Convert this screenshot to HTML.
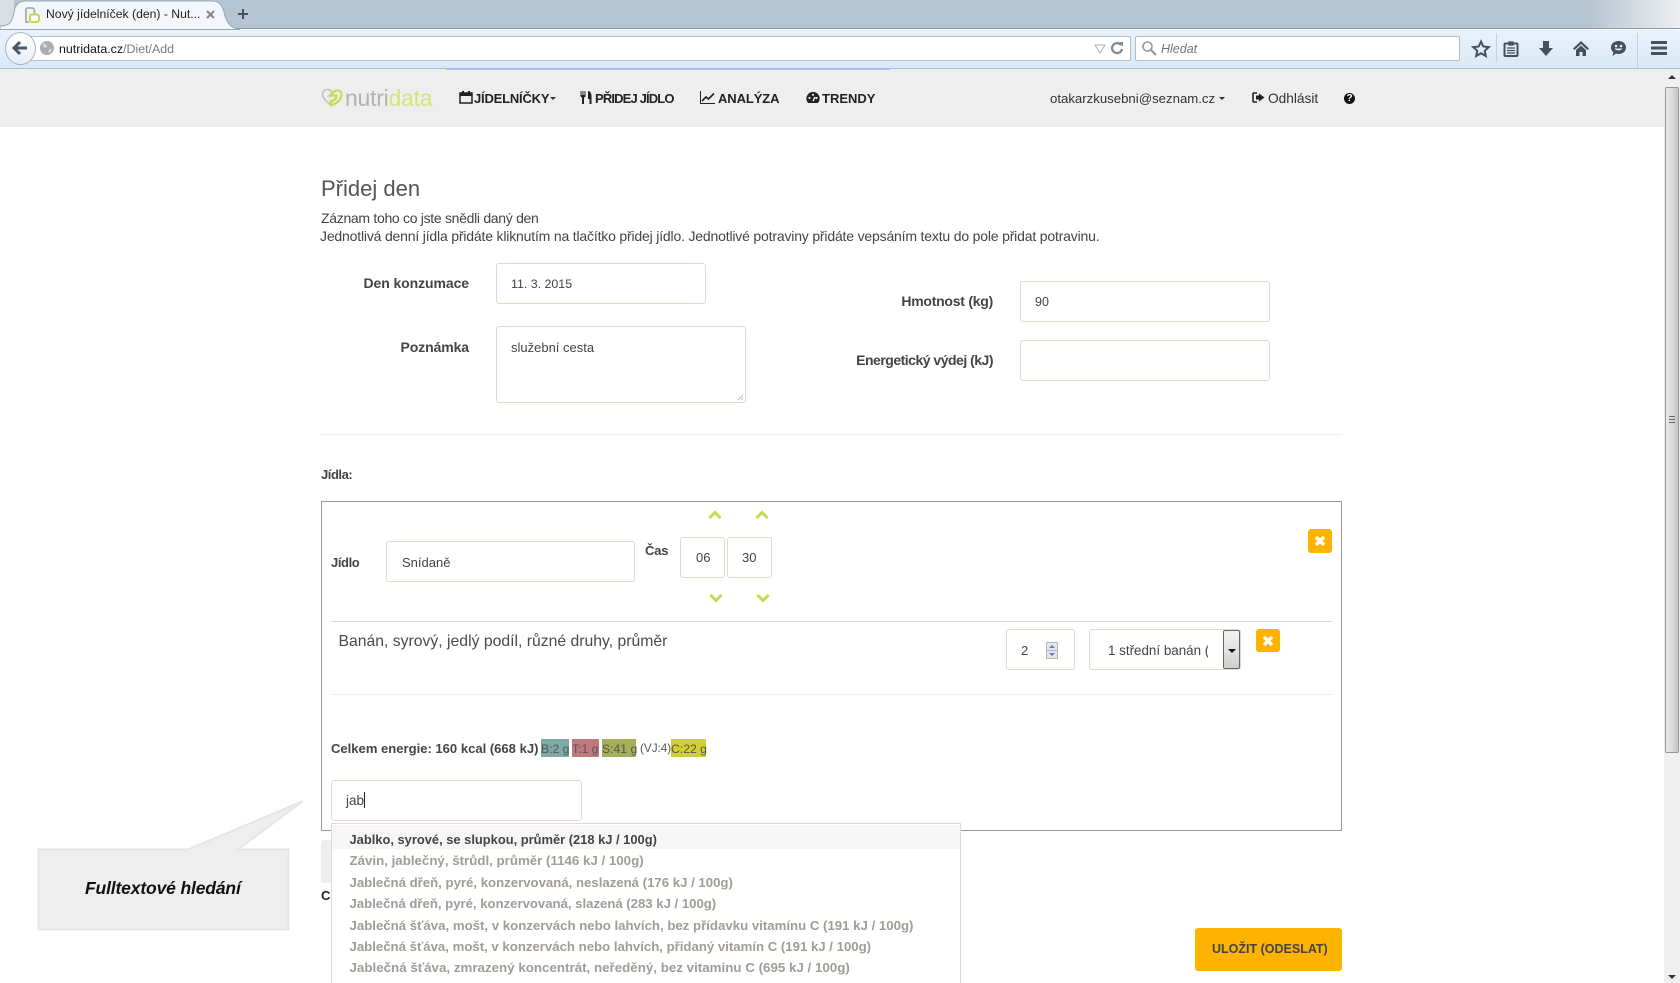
<!DOCTYPE html>
<html lang="cs"><head><meta charset="utf-8"><title>Nový jídelníček (den) - Nutridata</title>
<style>
html{margin:0;padding:0;background:#fff;width:1680px;height:983px;overflow:hidden}
body{margin:0;padding:0;background:#fff;width:1680px;height:983px;position:relative;overflow:hidden;font-family:"Liberation Sans",sans-serif;font-size:14px;color:#444}
.a{position:absolute;box-sizing:border-box}
.t{position:absolute;white-space:nowrap;line-height:20px;height:20px}
.b{font-weight:bold}
.inp{position:absolute;box-sizing:border-box;background:#fff;border:1px solid #e2dacd;border-radius:3px}
.x{position:absolute;background:#fdb300;border-radius:3px}
svg{position:absolute;overflow:visible}
.nav{color:#222;font-weight:bold;font-size:13px}
.dd{color:#a09c96;font-weight:bold;left:349.500px}
</style></head><body>

<!-- tab strip -->
<div class="a" style="left:0;top:0;width:1680px;height:29px;background:linear-gradient(90deg,#b6c5d2 0,#b6c5d2 1590px,#eef0f2 1680px);border-bottom:1px solid #8a99a6"></div>
<div class="a" style="left:0;top:0;width:14px;height:28px;background:#d9dfe5"></div>
<svg style="left:0;top:0" width="240" height="30"><path d="M0 26C10 26 12 22 14 12 15 5 19 1 26 1H212C219 1 222 5 224 12 226 22 230 28 240 29.500H0Z" fill="#f3f7fb" stroke="#9aa8b4"/></svg>
<svg style="left:24px;top:7px" width="16" height="17"><path d="M2 13V2.500C2 1.500 3 1 3.500 1H8C9.500 1 10.500 2.500 10.500 4V7" fill="none" stroke="#a8a8a8" stroke-width="1.700"/><path d="M2 13V15H5" fill="none" stroke="#a8a8a8" stroke-width="1.700"/><rect x="6" y="7.500" width="9" height="7.500" rx="2" fill="#fff" stroke="#c3d93f" stroke-width="2"/></svg>
<div class="t" style="left:46px;top:4px;font-size:12.200px;color:#222">Nový jídelníček (den) - Nut...</div>
<svg style="left:206px;top:10px" width="9" height="9"><path d="M1 1L8 8M8 1L1 8" stroke="#7d8790" stroke-width="2"/></svg>
<svg style="left:236px;top:7px" width="14" height="14"><path d="M7 2V12M2 7H12" stroke="#46525f" stroke-width="2"/></svg>

<!-- toolbar -->
<div class="a" style="left:0;top:30px;width:1680px;height:39px;background:linear-gradient(#e9f2fb,#dbe8f6);border-bottom:1px solid #a8bdd2"></div>
<div class="a" style="left:26px;top:36px;width:1105px;height:25px;background:#fff;border:1px solid #afbfcf;border-radius:2px"></div>
<div class="a" style="left:5px;top:32px;width:31px;height:33px;border-radius:50%;background:linear-gradient(#fff,#e6eef7);border:1px solid #a6b4c2"></div>
<svg style="left:11px;top:40px" width="18" height="16"><path d="M9 2L3 8L9 14M3 8H16" fill="none" stroke="#4a5766" stroke-width="3"/></svg>
<div class="a" style="left:40px;top:41px;width:14px;height:14px;border-radius:50%;background:#a9adb1"></div>
<svg style="left:40px;top:41px" width="14" height="14"><path d="M3 2L7 4 6 7 3 6ZM9 8L12 8 10 12 8 11Z" fill="#d5d8db"/></svg>
<div class="t" style="left:59px;top:39px;font-size:12.400px;color:#111">nutridata.cz<span style="color:#7b7b7b">/Diet/Add</span></div>
<svg style="left:1094px;top:44px" width="12" height="10"><path d="M1 1H11L6 9Z" fill="none" stroke="#aab2ba"/></svg>
<svg style="left:1110px;top:41px" width="14" height="14"><path d="M11 4A5 5 0 1 0 12 8" fill="none" stroke="#7f8a95" stroke-width="2.200"/><path d="M9 1L13 1V6Z" fill="#7f8a95"/></svg>
<div class="a" style="left:1135px;top:36px;width:325px;height:25px;background:#fff;border:1px solid #afbfcf;border-radius:2px"></div>
<svg style="left:1141px;top:40px" width="16" height="16"><circle cx="6.500" cy="6.500" r="4.500" fill="none" stroke="#8f98a1" stroke-width="1.600"/><path d="M10 10L15 15" stroke="#8f98a1" stroke-width="2.200"/></svg>
<div class="t" style="left:1161px;top:39px;font-size:12.500px;font-style:italic;color:#757575">Hledat</div>

<svg style="left:1472px;top:40px" width="18" height="17"><path d="M9 1.500L11.300 6.500 16.800 7.100 12.700 10.800 13.800 16 9 13.300 4.200 16 5.300 10.800 1.200 7.100 6.700 6.500Z" fill="none" stroke="#44505e" stroke-width="2"/></svg>
<div class="a" style="left:1496px;top:33px;width:1px;height:29px;background:#c3d1df"></div>
<svg style="left:1503px;top:40px" width="16" height="17"><rect x="1.500" y="3.500" width="13" height="12.500" rx="1" fill="none" stroke="#44505e" stroke-width="2"/><path d="M6 2H10V5H6ZM4 8H12M4 10.500H12M4 13H12" stroke="#44505e" stroke-width="1.300" fill="#44505e"/></svg>
<svg style="left:1538px;top:40px" width="16" height="17"><path d="M5 1H11V8H15L8 16 1 8H5Z" fill="#44505e"/></svg>
<svg style="left:1572px;top:40px" width="18" height="17"><path d="M9 1L17 8.500 15.500 10 9 4 2.500 10 1 8.500Z" fill="#44505e"/><path d="M4 10L9 5.500 14 10V16H10.500V12H7.500V16H4Z" fill="#44505e"/></svg>
<svg style="left:1610px;top:40px" width="17" height="17"><path d="M8.500 1C13 1 16 3.800 16 7.500S13 14 8.500 14C7.500 14 6.700 13.900 6 13.600L2.500 16 3.300 12.300C1.800 11 1 9.400 1 7.500 1 3.800 4 1 8.500 1Z" fill="#44505e"/><circle cx="6" cy="6" r="1.300" fill="#e3edf8"/><circle cx="11" cy="6" r="1.300" fill="#e3edf8"/><path d="M4.500 8.500C6 11 11 11 12.500 8.500Z" fill="#e3edf8"/></svg>
<div class="a" style="left:1637px;top:33px;width:1px;height:35px;background:#c3d1df"></div>
<svg style="left:1651px;top:41px" width="16" height="14"><path d="M0 0H16V3H0ZM0 5.500H16V8.500H0ZM0 11H16V14H0Z" fill="#44505e"/></svg>

<!-- nav -->
<div class="a" style="left:0;top:69px;width:1664px;height:58px;background:#eee"></div>
<div class="a" style="left:446px;top:69px;width:444px;height:1px;background:#c5d96a"></div>

<svg style="left:321px;top:88px" width="24" height="20"><path d="M11 18C6 14 1.500 10 1.500 6.500 1.500 3.500 4 1.500 6.500 1.500 8.500 1.500 10 2.500 11 4" fill="none" stroke="#c0c0c0" stroke-width="1.600"/><path d="M10 17C13 17 20 13 20.500 7 20.800 3.800 18 2 15.500 2.500 12 3.500 11 6 9 7.500H15.500C15.500 11 12.500 13 10 13Z" fill="none" stroke="#c6dc50" stroke-width="2.200"/></svg>
<div class="t" style="left:345px;top:88px;font-size:23px;letter-spacing:-.25px;color:#b2b2b2">nutri<span style="color:#d4e476">data</span></div>

<svg style="left:459px;top:90px" width="14" height="14"><rect x="1" y="3" width="12" height="10" fill="none" stroke="#222" stroke-width="1.500"/><path d="M1 3H13V6H1ZM3 1H5V3H3ZM9 1H11V3H9Z" fill="#222"/></svg>
<div class="t nav" style="left:474px;top:89px;letter-spacing:-.2px">JÍDELNÍČKY</div>
<div class="a" style="left:550px;top:97px;border:3px solid transparent;border-top-color:#333;border-bottom:0"></div>
<svg style="left:580px;top:91px" width="12" height="13"><path d="M.5 0V5C.5 6 1.500 6.500 2 6.500V13H4V6.500C4.500 6.500 5.500 6 5.500 5V0H4.500V4H3.500V0H2.500V4H1.500V0ZM8 0C10 0 11.500 2 11.500 5V13H9.500V8H8Z" fill="#222"/></svg>
<div class="t nav" style="left:595px;top:89px;letter-spacing:-.85px">PŘIDEJ JÍDLO</div>
<svg style="left:700px;top:91px" width="15" height="13"><path d="M.5 0V12.500H15" fill="none" stroke="#222"/><path d="M2 10L6 6 8.500 8 14 2.500" fill="none" stroke="#222" stroke-width="1.600"/></svg>
<div class="t nav" style="left:718px;top:89px;letter-spacing:-.1px">ANALÝZA</div>
<svg style="left:806px;top:91px" width="14" height="13"><path d="M7 1A6.500 6.500 0 0 0 2.200 12H11.800A6.500 6.500 0 0 0 7 1Z" fill="#222"/><circle cx="3.500" cy="7" r="1.100" fill="#eee"/><circle cx="7" cy="3.800" r="1.100" fill="#eee"/><circle cx="10.500" cy="7" r="1.100" fill="#eee"/><path d="M7 10L9 6" stroke="#eee" stroke-width="1.400"/></svg>
<div class="t nav" style="left:822px;top:89px">TRENDY</div>

<div class="t" style="left:1050px;top:89px;font-size:13.200px;color:#333">otakarzkusebni@seznam.cz</div>
<div class="a" style="left:1219px;top:97px;border:3px solid transparent;border-top-color:#333;border-bottom:0"></div>
<svg style="left:1252px;top:92px" width="13" height="11"><path d="M5 1H2C1.300 1 1 1.400 1 2V9C1 9.600 1.300 10 2 10H5" fill="none" stroke="#222" stroke-width="1.600"/><path d="M7 1.500L12.500 5.500 7 9.500V7.500H4V3.500H7Z" fill="#222"/></svg>
<div class="t" style="left:1268px;top:89px;font-size:13.700px;color:#333">Odhlásit</div>
<div class="a" style="left:1344px;top:93px;width:11px;height:11px;border-radius:50%;background:#111;color:#fff;font-size:10px;line-height:11px;font-weight:bold;text-align:center">?</div>

<!-- heading -->
<div class="t" style="left:321px;top:179px;font-size:22px;color:#555">Přidej den</div>
<div class="t" style="left:321px;top:208px;letter-spacing:-.3px">Záznam toho co jste snědli daný den</div>
<div class="t" style="left:320px;top:226px;letter-spacing:-.18px">Jednotlivá denní jídla přidáte kliknutím na tlačítko přidej jídlo. Jednotlivé potraviny přidáte vepsáním textu do pole přidat potravinu.</div>

<!-- form -->
<div class="t b" style="left:263px;width:206px;text-align:right;top:273px;letter-spacing:-.08px">Den konzumace</div>
<div class="inp" style="left:496px;top:263px;width:210px;height:41px"></div>
<div class="t" style="left:511px;top:274px;font-size:12.400px">11. 3. 2015</div>
<div class="t b" style="left:263px;width:206px;text-align:right;top:337px;letter-spacing:-.1px">Poznámka</div>
<div class="inp" style="left:496px;top:326px;width:250px;height:77px"></div>
<div class="t" style="left:511px;top:338px;font-size:13px">služební cesta</div>
<svg style="left:737px;top:394px" width="7" height="7"><path d="M6 1L1 6M6 4L4 6" stroke="#bbb"/></svg>

<div class="t b" style="left:793px;width:200px;text-align:right;top:291px;letter-spacing:-.25px">Hmotnost (kg)</div>
<div class="inp" style="left:1020px;top:281px;width:250px;height:41px"></div>
<div class="t" style="left:1035px;top:292px;font-size:12.500px">90</div>
<div class="t b" style="left:793px;width:200px;text-align:right;top:350px;letter-spacing:-.5px">Energetický výdej (kJ)</div>
<div class="inp" style="left:1020px;top:340px;width:250px;height:41px"></div>

<div class="a" style="left:321px;top:434px;width:1021px;height:1px;background:#eee"></div>
<div class="t b" style="left:321px;top:465px;font-size:13px;letter-spacing:-.45px">Jídla:</div>

<!-- box -->
<div class="a" style="left:321px;top:501px;width:1021px;height:330px;border:1px solid #999;background:#fff"></div>

<svg style="left:708px;top:510px" width="14" height="10"><path d="M1.500 8L7 2.500 12.500 8" fill="none" stroke="#c5dc50" stroke-width="3"/></svg>
<svg style="left:755px;top:510px" width="14" height="10"><path d="M1.500 8L7 2.500 12.500 8" fill="none" stroke="#c5dc50" stroke-width="3"/></svg>
<svg style="left:709px;top:593px" width="14" height="10"><path d="M1.500 2L7 7.500 12.500 2" fill="none" stroke="#c5dc50" stroke-width="3"/></svg>
<svg style="left:756px;top:593px" width="14" height="10"><path d="M1.500 2L7 7.500 12.500 2" fill="none" stroke="#c5dc50" stroke-width="3"/></svg>

<div class="t b" style="left:331px;top:553px;font-size:13px;letter-spacing:-.4px">Jídlo</div>
<div class="inp" style="left:386px;top:541px;width:249px;height:41px"></div>
<div class="t" style="left:402px;top:553px;font-size:13px">Snídaně</div>
<div class="t b" style="left:645px;top:541px;font-size:13px;letter-spacing:-.2px">Čas</div>
<div class="inp" style="left:680px;top:537px;width:45px;height:41px"></div>
<div class="inp" style="left:727px;top:537px;width:45px;height:41px"></div>
<div class="t" style="left:696px;top:548px;font-size:13px">06</div>
<div class="t" style="left:742px;top:548px;font-size:13px">30</div>

<div class="x" style="left:1308px;top:529px;width:24px;height:24px"></div>
<svg style="left:1314px;top:535px" width="12" height="12"><path d="M2 2L10 10M10 2L2 10" stroke="#fff" stroke-width="3.400"/></svg>

<div class="a" style="left:331px;top:621px;width:1001px;height:1px;background:#ddd6ca"></div>
<div class="t" style="left:338.500px;top:632px;font-size:15.750px;color:#4a4a4a">Banán, syrový, jedlý podíl, různé druhy, průměr</div>

<div class="inp" style="left:1006px;top:629px;width:69px;height:41px"></div>
<div class="t" style="left:1021px;top:641px;font-size:13px">2</div>
<svg style="left:1046px;top:642px" width="12" height="17"><rect x=".5" y=".5" width="11" height="16" fill="#e4e6ec" stroke="#b5b8c0"/><path d="M.5 8.500H11.500" stroke="#b5b8c0"/><path d="M3 6L6 3 9 6ZM3 11H9L6 14Z" fill="#6b7ab8"/></svg>
<div class="inp" style="left:1089px;top:629px;width:152px;height:41px"></div>
<div class="t" style="left:1108px;top:641px;font-size:13.400px;width:100px;overflow:hidden">1 střední banán (100 g)</div>
<div class="a" style="left:1223px;top:630px;width:17px;height:39px;background:linear-gradient(#f3f3f3,#cfcfcf);border:1px solid #666;border-radius:2px"></div>
<div class="a" style="left:1228px;top:649px;border:4px solid transparent;border-top-color:#111;border-bottom:0"></div>

<div class="x" style="left:1256px;top:629px;width:24px;height:23px"></div>
<svg style="left:1262px;top:635px" width="12" height="12"><path d="M2 2L10 10M10 2L2 10" stroke="#fff" stroke-width="3.400"/></svg>

<div class="a" style="left:331px;top:694px;width:1001px;height:1px;background:#f0eeea"></div>

<div class="a" style="left:541px;top:739px;width:28px;height:18px;background:#7ea9a9"></div>
<div class="a" style="left:572px;top:739px;width:27px;height:18px;background:#bf7a80"></div>
<div class="a" style="left:602px;top:739px;width:34px;height:18px;background:#a4af58"></div>
<div class="a" style="left:671px;top:739px;width:35px;height:18px;background:#d1d02c"></div>
<div class="t b" style="left:331px;top:739px;font-size:13.050px">Celkem energie: 160 kcal (668 kJ)</div>
<div class="t" style="left:541px;top:739px;font-size:12.200px;color:#555">B:2 g</div>
<div class="t" style="left:572px;top:739px;font-size:12.200px;color:#555">T:1 g</div>
<div class="t" style="left:602px;top:739px;font-size:12.200px;color:#555">S:41 g</div>
<div class="t" style="left:640px;top:739px;font-size:11.700px;color:#555">(VJ:4)</div>
<div class="t" style="left:671px;top:739px;font-size:12.200px;color:#555">C:22 g</div>

<div class="inp" style="left:331px;top:780px;width:251px;height:41px"></div>
<div class="t" style="left:346px;top:791px;font-size:13.500px">jab</div>
<div class="a" style="left:364px;top:792px;width:1px;height:16px;background:#222"></div>

<!-- behind dropdown -->
<div class="a" style="left:321px;top:840px;width:40px;height:43px;background:#eee;border-radius:3px"></div>
<div class="t b" style="left:321px;top:886px;color:#222;font-size:13px">Co</div>

<!-- dropdown -->
<div class="a" style="left:331px;top:823px;width:630px;height:165px;background:#fff;border:1px solid #e2dacd"></div>
<div class="a" style="left:332px;top:825px;width:628px;height:24px;background:#f6f6f6"></div>
<div class="t dd" style="top:830px;color:#444;font-size:12.900px">Jablko, syrové, se slupkou, průměr (218 kJ / 100g)</div>
<div class="t dd" style="top:851px;font-size:13.300px">Závin, jablečný, štrůdl, průměr (1146 kJ / 100g)</div>
<div class="t dd" style="top:873px;font-size:13.200px">Jablečná dřeň, pyré, konzervovaná, neslazená (176 kJ / 100g)</div>
<div class="t dd" style="top:894px;font-size:13.150px">Jablečná dřeň, pyré, konzervovaná, slazená (283 kJ / 100g)</div>
<div class="t dd" style="top:916px;font-size:13.230px">Jablečná šťáva, mošt, v konzervách nebo lahvích, bez přídavku vitamínu C (191 kJ / 100g)</div>
<div class="t dd" style="top:937px;font-size:13.200px">Jablečná šťáva, mošt, v konzervách nebo lahvích, přidaný vitamín C (191 kJ / 100g)</div>
<div class="t dd" style="top:958px;font-size:13.350px">Jablečná šťáva, zmrazený koncentrát, neředěný, bez vitaminu C (695 kJ / 100g)</div>

<!-- callout -->
<svg style="left:0;top:790px" width="320" height="150"><path d="M38.500 59.500H188L303 11 238 59.500H288.500V139.500H38.500Z" fill="#eee" stroke="#e6e6e6" stroke-width="2"/></svg>
<div class="t" style="left:85px;top:878px;font-size:17.500px;font-style:italic;font-weight:bold;color:#111;letter-spacing:-.15px">Fulltextové hledání</div>

<!-- save -->
<div class="a" style="left:1195px;top:928px;width:147px;height:43px;background:#fdb300;border-radius:3px"></div>
<div class="t b" style="left:1212px;top:939px;font-size:12.500px;color:#444">ULOŽIT (ODESLAT)</div>

<!-- scrollbar -->
<div class="a" style="left:1664px;top:69px;width:16px;height:914px;background:#efefef"></div>
<div class="a" style="left:1668px;top:75px;border:4px solid transparent;border-bottom-color:#333;border-top:0"></div>
<div class="a" style="left:1668px;top:975px;border:4px solid transparent;border-top-color:#333;border-bottom:0"></div>
<div class="a" style="left:1665px;top:87px;width:14px;height:666px;background:linear-gradient(90deg,#e9e9e9,#dcdcdc 45%,#c4c4c4);border:1px solid #999;border-radius:2px"></div>
<div class="a" style="left:1669px;top:416px;width:6px;height:7px;border-top:1px solid #666;border-bottom:1px solid #666"></div>
<div class="a" style="left:1669px;top:419px;width:6px;height:1px;background:#666"></div>
</body></html>
